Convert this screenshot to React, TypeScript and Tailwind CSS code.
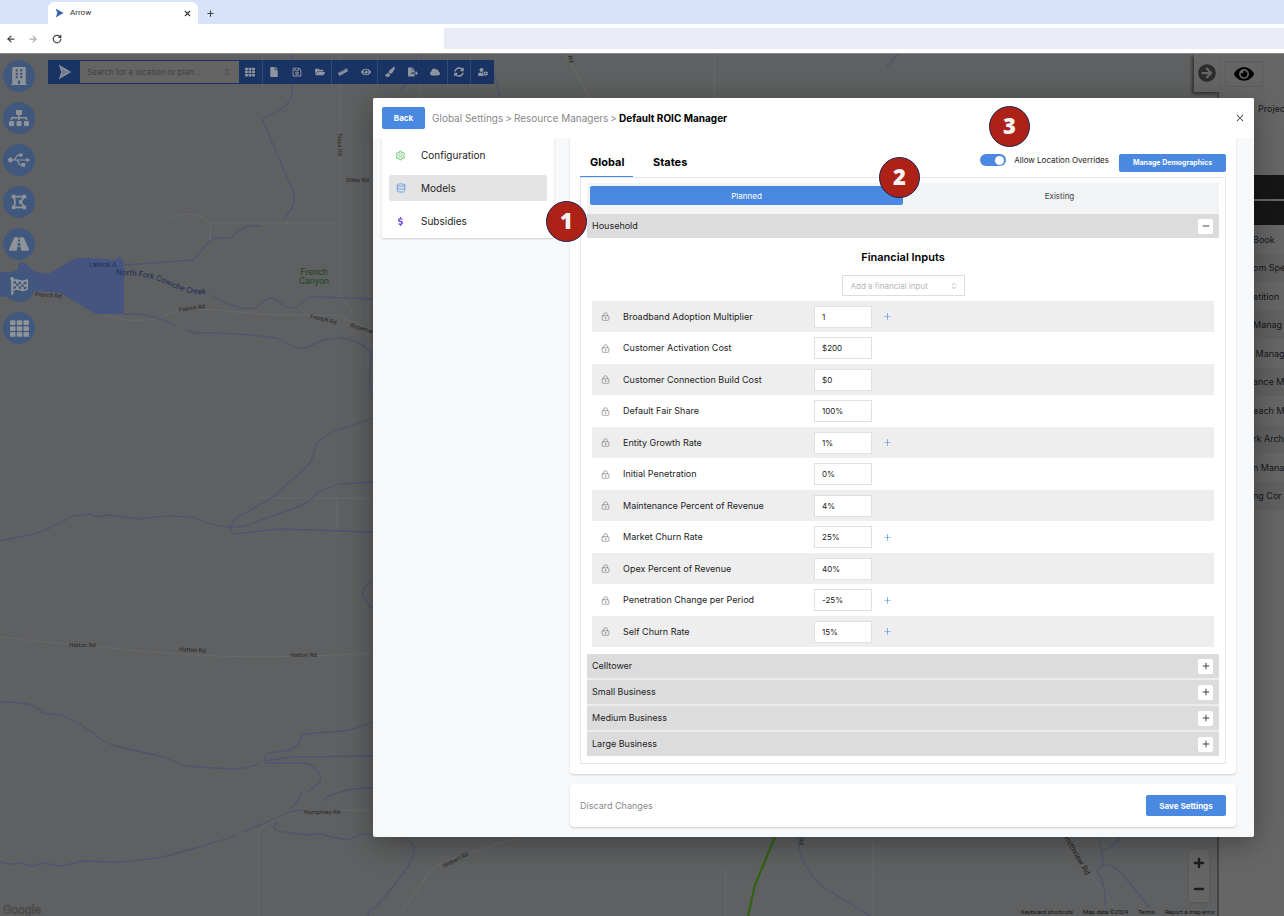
import { useState, type ReactNode } from "react";
import { AiOutlineClose, AiOutlinePlus, AiOutlineSetting } from "react-icons/ai";
import {
  FaArrowCircleRight,
  FaBuilding,
  FaCloud,
  FaDollarSign,
  FaEye,
  FaFile,
  FaFileExport,
  FaFlagCheckered,
  FaFolderOpen,
  FaPaintBrush,
  FaRegSave,
  FaRoad,
  FaRuler,
  FaSitemap,
  FaSyncAlt,
  FaTh,
  FaUsb,
  FaUserCog,
} from "react-icons/fa";
import {
  ArrowLeft,
  ArrowRight,
  ChevronsUpDown,
  Database,
  LockKeyhole,
  Minus,
  Plus,
  RotateCw,
  X,
} from "lucide-react";

type FinancialInput = {
  name: string;
  value: string;
  expandable?: boolean;
};

const FINANCIAL_INPUTS: FinancialInput[] = [
  { name: "Broadband Adoption Multiplier", value: "1", expandable: true },
  { name: "Customer Activation Cost", value: "$200" },
  { name: "Customer Connection Build Cost", value: "$0" },
  { name: "Default Fair Share", value: "100%" },
  { name: "Entity Growth Rate", value: "1%", expandable: true },
  { name: "Initial Penetration", value: "0%" },
  { name: "Maintenance Percent of Revenue", value: "4%" },
  { name: "Market Churn Rate", value: "25%", expandable: true },
  { name: "Opex Percent of Revenue", value: "40%" },
  { name: "Penetration Change per Period", value: "-25%", expandable: true },
  { name: "Self Churn Rate", value: "15%", expandable: true },
];

const CLOSED_SECTIONS = ["Celltower", "Small Business", "Medium Business", "Large Business"];

const PANEL_ROWS = [
  "Book",
  "om Spe",
  "etition",
  "Manag",
  " Manag",
  "ance M",
  "each M",
  "rk Arch",
  "n Mana",
  "ng Cor",
];

const TOOLS = [
  { label: "Grid", icon: <FaTh />, divider: false },
  { label: "New", icon: <FaFile />, divider: true },
  { label: "Save", icon: <FaRegSave />, divider: false },
  { label: "Open", icon: <FaFolderOpen />, divider: false },
  { label: "Measure", icon: <FaRuler />, divider: true },
  { label: "View", icon: <FaEye />, divider: false },
  { label: "Paint", icon: <FaPaintBrush />, divider: true },
  { label: "Export", icon: <FaFileExport />, divider: false },
  { label: "Cloud", icon: <FaCloud />, divider: false },
  { label: "Sync", icon: <FaSyncAlt />, divider: true },
  { label: "User settings", icon: <FaUserCog />, divider: true },
];

const primaryBtn = "rounded-xs bg-[#4a89e2] text-center font-bold text-white";

function ArrowLogo({ className }: { className: string }) {
  return (
    <svg viewBox="0 0 24 24" className={className} aria-hidden="true">
      <path d="M4 1 L23 12 L4 23 L8 12 Z" fill="currentColor" />
      <path
        d="M5 4 L10 8 L11 12 L10 16 L5 20 M10 8 L15 12 L10 16 M8 12 H22"
        fill="none"
        stroke="#22375f"
        strokeOpacity="0.55"
        strokeWidth="1"
      />
    </svg>
  );
}

function BoundaryIcon() {
  return (
    <svg viewBox="0 0 20 20" className="size-[18px]" fill="none" stroke="currentColor" strokeWidth="2">
      <path d="M4 4 H16 L12 10 L16 16 H4 C6 12 6 8 4 4 Z" />
      <g fill="currentColor" stroke="none">
        <rect x="2" y="2" width="4" height="4" />
        <rect x="14" y="2" width="4" height="4" />
        <rect x="2" y="14" width="4" height="4" />
        <rect x="14" y="14" width="4" height="4" />
        <rect x="10" y="8" width="3" height="4" />
      </g>
    </svg>
  );
}

const RAIL = [
  { label: "Buildings", icon: <FaBuilding size={18} /> },
  { label: "Hierarchy", icon: <FaSitemap size={20} /> },
  { label: "Connections", icon: <FaUsb size={22} /> },
  { label: "Boundaries", icon: <BoundaryIcon /> },
  { label: "Roads", icon: <FaRoad size={20} /> },
  { label: "Milestones", icon: <FaFlagCheckered size={18} /> },
  { label: "Tiles", icon: <FaTh size={19} /> },
];

function BrowserChrome() {
  return (
    <header className="shrink-0 border-b border-[#8a8a8a] bg-white">
      <div className="flex h-6 items-end bg-[#d7e2fb] pl-12">
        <div className="flex h-[22px] w-[150px] items-center rounded-t-md bg-white px-1.5 font-[Roboto,sans-serif] text-[8px] text-[#333]">
          <ArrowLogo className="mr-1.5 size-2.5 text-[#3f6fc0]" />
          <span className="flex-1">Arrow</span>
          <button type="button" aria-label="Close tab">
            <X size={9} strokeWidth={3} />
          </button>
        </div>
        <button type="button" aria-label="New tab" className="flex h-[22px] items-center px-2 text-[#444]">
          <Plus size={9} strokeWidth={3} />
        </button>
      </div>
      <div className="flex h-[29px] items-center text-[#444]">
        <button type="button" aria-label="Back" className="pl-1.5">
          <ArrowLeft size={10} strokeWidth={3} />
        </button>
        <button type="button" aria-label="Forward" className="pl-3 text-[#aaa]">
          <ArrowRight size={10} strokeWidth={3} />
        </button>
        <button type="button" aria-label="Reload" className="pl-3.5">
          <RotateCw size={10} strokeWidth={3} />
        </button>
        <input aria-label="Address" className="ml-[382px] h-[21px] min-w-0 flex-1 bg-[#e9ecf6]" />
      </div>
    </header>
  );
}

function MapCanvas() {
  return (
    <svg
      viewBox="0 54 1220 862"
      preserveAspectRatio="xMinYMin slice"
      className="absolute inset-0 size-full border-r-2 border-[#444] bg-[#5f6061]"
      fontFamily="Roboto, sans-serif"
      fontSize="7"
      fill="#262626"
      aria-label="Map"
    >
      <g fill="none" stroke="#68696a" strokeWidth="1.2">
        <path d="M340 54 V296 L352 312 M368 140 V370" />
        <path d="M170 218 Q195 208 210 223 H335 M210 223 V240" />
        <path d="M60 294 Q80 300 96 312 Q130 325 160 318 C190 300 230 316 300 315 H335 L373 330" />
        <path d="M256 498 H373 M337 498 V530" />
        <path d="M0 637 Q100 648 180 654 T373 653" />
        <path d="M304 810 Q270 818 258 832 V916 M340 810 H373" />
        <path d="M518 838 L453 858 Q432 866 424 880 L400 913" />
        <path d="M714 54 V98 M420 54 V98 M565 54 L590 98" />
        <path d="M873 837 V916 M726 870 V916 M1090 873 L1120 916" />
      </g>
      <g fill="none" stroke="#505471" strokeWidth="1.3" strokeLinejoin="round">
        <path d="M292 54 V95 Q289 106 275 113 Q262 117 263 121 L294 194 Q296 206 283 220" />
        <path d="M124 265 L193 260 L213 238 L230 238 L246 226 L260 226" />
        <path d="M211 295 Q240 312 256 308 Q268 295 275 299 Q290 312 299 306 Q306 295 320 297 L373 299" />
        <path d="M124 314 Q150 312 176 326 M186 330 L197 333 Q230 332 276 338 L297 348 H308 Q320 338 342 338 Q365 342 371 354 Q368 385 372 397" />
        <path d="M373 418 L335 431 Q316 440 315 448 Q312 463 305 468 L273 497 L235 519 Q228 530 233 534 L280 529 L373 532" />
        <path d="M373 482 L340 484 Q328 488 318 492 Q308 504 297 507 L245 526 Q220 530 195 518 Q165 514 140 519 L110 515 L96 517 L90 514 L73 516 Q45 532 29 535 L0 541" />
        <path d="M373 582 Q358 588 364 598 L372 609" />
        <path d="M0 702 Q25 702 37 707 Q42 714 47 714 L61 715 Q80 722 102 740 L112 745 L163 757 L186 766 Q215 768 233 769 Q250 768 259 764" />
        <path d="M265 762 Q263 756 270 753 L290 750 L298 745 L303 734 L345 731 L359 727 L373 722" />
        <path d="M265 761 Q285 757 302 757 L373 756 M265 763 L300 763 Q312 763 316 769 Q324 778 318 784 L307 792 M301 792 Q298 803 291 808 M322 801 Q338 788 373 788" />
        <path d="M0 862 L10 864 L20 863 L32 866 L43 863 L61 866 L84 861 L118 862 L159 858 L196 848 L235 836 M243 832 L265 823 L291 812 L304 810" />
        <path d="M278 822 Q268 828 282 832 L306 835 L320 834 L347 840 L363 834 H373" />
        <path d="M400 837 Q416 842 414 853 L408 867 L388 893 L376 907 Q370 908 368 916" />
        <path d="M420 54 Q425 70 400 90 M493 70 L500 98 M886 68 L898 54" />
        <path d="M798 837 Q798 850 804 862 Q815 885 833 893 L870 916" />
        <path d="M1099 838 Q1103 855 1103 865 Q1094 870 1099 874 Q1106 885 1105 907 M1103 865 Q1112 864 1120 872 L1133 887 L1149 907 M1103 851 Q1115 845 1120 838" />
      </g>
      <path d="M775 837 L755 885 L748 916" fill="none" stroke="#306411" strokeWidth="2.2" />
      <path
        d="M0 272 H18 V264 Q22 260 27 265 Q38 276 50 273 L74 259 Q82 256 116 260 L119 256 L124 262 V314 H96 Q80 305 60 293 L35 291 L20 296 L0 297 Z"
        fill="#46557f"
      />
      <path id="creek" d="M116 275 Q150 275 170 286 Q190 296 214 294" fill="none" />
      <text fill="#1b2f5c" fontSize="8">
        <textPath href="#creek">North Fork Cowiche Creek</textPath>
      </text>
      <text x="89" y="267" fill="#1b2f5c">
        Lateral A
      </text>
      <g fill="#1f4420" fontSize="9" textAnchor="middle">
        <text x="314" y="275">French</text>
        <text x="314" y="284">Canyon</text>
      </g>
      <g fontSize="6">
        <text transform="translate(35 296) rotate(5)">French Rd</text>
        <text transform="translate(179 312) rotate(-8)">French Rd</text>
        <text transform="translate(310 318) rotate(14)">French Rd</text>
        <text transform="translate(350 327) rotate(16)">Roseman</text>
        <text transform="translate(338 134) rotate(90)">Naye Rd</text>
        <text x="346" y="182">Dilley Rd</text>
        <text x="69" y="647">Hatton Rd</text>
        <text transform="translate(179 651) rotate(4)">Hatton Rd</text>
        <text x="290" y="657">Hatton Rd</text>
        <text x="304" y="814">Humphrey Rd</text>
        <text transform="translate(444 868) rotate(-27)">Wobert Rd</text>
        <text transform="translate(799 838) rotate(85)">Rd</text>
        <text transform="translate(568 56) rotate(80)">Rd</text>
      </g>
      <text fontSize="8" transform="translate(1064 838) rotate(60)">mithview Rd</text>
      <text x="3" y="914" fontSize="12" fill="#5f6061" stroke="#484848" strokeWidth="0.7">
        Google
      </text>
    </svg>
  );
}

function MapToolbar() {
  return (
    <div className="flex h-6 w-[446px] items-stretch bg-[#1a3365] text-[#8f959e]">
      <button type="button" aria-label="Home" className="flex w-8 items-center justify-center">
        <ArrowLogo className="size-4" />
      </button>
      <div className="relative my-px w-[159px] bg-[#646464]">
        <input
          aria-label="Search"
          placeholder="Search for a location or plan..."
          className="block size-full pr-5 pl-[7px] text-[8px] placeholder:text-[#414141]"
        />
        <ChevronsUpDown size={8} className="absolute top-[7px] right-2 text-[#303030]" />
      </div>
      {TOOLS.map((tool) => (
        <button
          key={tool.label}
          type="button"
          aria-label={tool.label}
          className={`flex flex-1 items-center justify-center text-[10px] ${
            tool.divider ? "border-l border-[#334b77]" : ""
          }`}
        >
          {tool.icon}
        </button>
      ))}
    </div>
  );
}

function MapControls() {
  return (
    <div className="flex flex-col items-end font-[Roboto,sans-serif] text-[#1d1d1d]">
      <div className="mr-2.5 mb-1.5 flex w-5 flex-col bg-[#656565] shadow">
        <button type="button" aria-label="Zoom in" className="flex h-[26px] items-center justify-center">
          <Plus size={14} strokeWidth={4} />
        </button>
        <button type="button" aria-label="Zoom out" className="flex h-[26px] items-center justify-center">
          <Minus size={14} strokeWidth={4} />
        </button>
      </div>
      <div className="flex gap-2.5 pr-1 text-[6px] leading-2 text-[#141414]">
        <button type="button">Keyboard shortcuts</button>
        <span>Map data ©2024</span>
        <a href="#terms">Terms</a>
        <a href="#report">Report a map error</a>
      </div>
    </div>
  );
}

function SidePanel() {
  return (
    <aside className="w-[65px] shrink-0 overflow-hidden bg-[#666] text-[9px] whitespace-pre text-[#161616]">
      <div className="flex h-10 items-center pl-1.5">
        <button
          type="button"
          aria-label="Toggle visibility"
          className="flex h-[26px] w-[38px] items-center justify-center border border-[#595e61] text-[20px] text-black"
        >
          <FaEye />
        </button>
      </div>
      <p className="mt-2 pl-[39px] leading-[14px]">Projec</p>
      <div className="mt-[59px] flex flex-col gap-0.5">
        <div className="h-6 bg-[#161616]" />
        <div className="h-6 bg-[#161616]" />
      </div>
      <ul>
        {PANEL_ROWS.map((row) => (
          <li key={row} className="flex h-7 items-center pl-[34px] odd:h-[29px] even:bg-[#616161]">
            {row}
          </li>
        ))}
      </ul>
    </aside>
  );
}

function Workspace() {
  return (
    <div className="absolute inset-0 flex">
      <div className="relative flex min-w-0 flex-1 flex-col justify-between">
        <MapCanvas />
        <div className="relative flex items-start pl-[3px]">
          <nav aria-label="Map layers" className="flex flex-col gap-2.5 pt-1.5">
            {RAIL.map((item) => (
              <button
                key={item.label}
                type="button"
                aria-label={item.label}
                className="flex size-8 items-center justify-center rounded-full bg-[#40587e] text-[#8f9297]"
              >
                {item.icon}
              </button>
            ))}
          </nav>
          <div className="ml-[13px] pt-1.5">
            <MapToolbar />
          </div>
          <button
            type="button"
            aria-label="Collapse panel"
            className="ml-auto flex h-[38px] w-[25px] items-center justify-center bg-[#666] text-[18px] text-[#2c2c2c] shadow-[-2px_2px_3px_#333]"
          >
            <FaArrowCircleRight />
          </button>
        </div>
        <div className="relative">
          <MapControls />
        </div>
      </div>
      <SidePanel />
    </div>
  );
}

function NavItem({ icon, label, active }: { icon: ReactNode; label: string; active?: boolean }) {
  return (
    <a
      href={`#${label.toLowerCase()}`}
      className={`flex h-[26px] items-center rounded-xs pl-1.5 text-[10px] text-[#222] ${
        active ? "bg-[#e4e4e4]" : ""
      }`}
    >
      <span className="mr-[15px] flex w-[11px] justify-center">{icon}</span>
      {label}
    </a>
  );
}

function SectionHeader({ title, open }: { title: string; open?: boolean }) {
  return (
    <div className="flex h-6 items-center justify-between bg-[#dcdcdc] pr-1.5 pl-[5px] text-[9px] text-[#222]">
      <h3>{title}</h3>
      <button
        type="button"
        aria-expanded={Boolean(open)}
        aria-label={title}
        className="flex size-[15px] items-center justify-center rounded-xs bg-white text-[#222]"
      >
        {open ? <Minus size={10} /> : <Plus size={10} />}
      </button>
    </div>
  );
}

function FinancialInputs() {
  return (
    <div className="px-[5px] pb-[7px] text-[#222]">
      <h2 className="pt-3 text-center text-[11px] leading-[14px] font-semibold text-black">
        Financial Inputs
      </h2>
      <div className="relative mx-auto mt-[11px] mb-[5px] h-[21px] w-[123px]">
        <select
          aria-label="Add a financial input"
          className="block size-full appearance-none border border-[#ddd] bg-white pl-2 text-[8px] text-[#b5b5b5]"
        >
          <option>Add a financial input</option>
        </select>
        <ChevronsUpDown size={8} className="pointer-events-none absolute top-[7px] right-[7px] text-[#999]" />
      </div>
      <table className="w-full table-fixed border-collapse">
        <colgroup>
          <col className="w-[31px]" />
          <col className="w-[191px]" />
          <col className="w-[58px]" />
          <col />
        </colgroup>
        <tbody>
          {FINANCIAL_INPUTS.map((input, i) => (
            <tr key={input.name} className="h-8 odd:h-[31px] odd:bg-[#eee]">
              <td className="p-0 pl-[9px]">
                <LockKeyhole size={9} strokeWidth={2} className="text-[#888]" />
              </td>
              <td className="p-0 text-[9px] leading-4">
                <label htmlFor={`input-${i}`}>{input.name}</label>
              </td>
              <td className="p-0">
                <input
                  id={`input-${i}`}
                  defaultValue={input.value}
                  className="block h-[22px] w-full border border-[#e0e0e0] bg-white pl-[7px] text-[8px]"
                />
              </td>
              <td className="p-0 pl-2.5">
                {input.expandable && (
                  <button
                    type="button"
                    aria-label={`Expand ${input.name}`}
                    className="flex size-[10px] items-center justify-center text-[#4a89e2]"
                  >
                    <AiOutlinePlus size={9} />
                  </button>
                )}
              </td>
            </tr>
          ))}
        </tbody>
      </table>
    </div>
  );
}

function Callout({ value, className }: { value: number; className: string }) {
  return (
    <span
      className={`absolute flex size-[41px] items-center justify-center rounded-full border border-[#1c2352] bg-[#ad2117] pb-0.5 font-['Open_Sans',sans-serif] text-[22px] font-extrabold text-[#f3f3f3] ${className}`}
    >
      {value}
    </span>
  );
}

function ManagerDialog() {
  const [allowOverrides, setAllowOverrides] = useState(true);

  return (
    <div
      role="dialog"
      aria-label="Default ROIC Manager"
      className="relative flex min-w-0 flex-1 flex-col self-start rounded-xs bg-[#f7f8fa] shadow-[0_6px_30px_rgba(0,0,0,0.35)]"
    >
      <div className="flex h-10 items-center rounded-t-xs bg-white px-[9px]">
        <button type="button" className={`${primaryBtn} h-[22px] w-[43px] text-[8px]`}>
          Back
        </button>
        <nav aria-label="Breadcrumb" className="ml-[7px] flex gap-0.5 text-[10px] text-[#888]">
          <a href="#global-settings">Global Settings</a>
          <span>&gt;</span>
          <a href="#resource-managers">Resource Managers</a>
          <span>&gt;</span>
          <strong className="font-bold text-black">Default ROIC Manager</strong>
        </nav>
        <button type="button" aria-label="Close" className="ml-auto text-[#444]">
          <AiOutlineClose size={10} />
        </button>
      </div>

      <div className="flex items-start gap-4 pr-[18px] pb-2.5 pl-[9px]">
        <nav
          aria-label="Settings"
          className="flex w-[172px] shrink-0 flex-col gap-[7px] rounded-b-xs bg-white px-[7px] py-1 shadow-[0_1px_2px_#ccc]"
        >
          <NavItem label="Configuration" icon={<AiOutlineSetting size={11} className="text-[#62c766]" />} />
          <NavItem label="Models" active icon={<Database size={10} className="text-[#5b95e6]" />} />
          <NavItem label="Subsidies" icon={<FaDollarSign size={9} className="text-[#6f45ea]" />} />
        </nav>

        <div className="flex min-w-0 flex-1 flex-col gap-2.5">
          <section className="rounded-b-sm bg-white px-2.5 pb-2.5 shadow-[0_1px_2px_#ccc]">
            <div className="flex h-[39px] items-end">
              <div role="tablist" className="flex text-[11px] font-bold text-black">
                <button
                  type="button"
                  role="tab"
                  aria-selected
                  className="h-[29px] w-[53px] border-b border-[#4a89e2] pl-2.5 text-left"
                >
                  Global
                </button>
                <button
                  type="button"
                  role="tab"
                  aria-selected={false}
                  className="h-[29px] border-b border-transparent pl-5"
                >
                  States
                </button>
              </div>
              <div className="ml-auto flex items-start gap-2.5 pb-[5px]">
                <label className="flex items-center gap-2 text-[8px] leading-3 text-[#222]">
                  <input
                    type="checkbox"
                    role="switch"
                    checked={allowOverrides}
                    onChange={(e) => setAllowOverrides(e.target.checked)}
                    className="flex h-3 w-[26px] appearance-none items-center rounded-full bg-[#bbb] px-0.5 before:size-[9px] before:rounded-full before:bg-white checked:justify-end checked:bg-[#4a89e2]"
                  />
                  Allow Location Overrides
                </label>
                <button type="button" className={`${primaryBtn} h-[18px] w-[107px] text-[7px]`}>
                  Manage Demographics
                </button>
              </div>
            </div>

            <div className="border border-[#e2e5ea] px-1.5 pt-[5px] pb-[7px]">
              <div role="tablist" className="flex h-[31px] bg-[#f1f3f5] px-[3px] pt-[3px] text-[8px]">
                <button
                  type="button"
                  role="tab"
                  aria-selected
                  className="h-[19px] flex-1 rounded-xs bg-[#4a89e2] text-white"
                >
                  Planned
                </button>
                <button type="button" role="tab" aria-selected={false} className="h-[19px] flex-1 text-[#444]">
                  Existing
                </button>
              </div>
              <SectionHeader title="Household" open />
              <FinancialInputs />
              <div className="flex flex-col gap-0.5 bg-[#ececec]">
                {CLOSED_SECTIONS.map((title) => (
                  <SectionHeader key={title} title={title} />
                ))}
              </div>
            </div>
          </section>

          <footer className="flex h-[43px] items-center justify-between rounded-sm bg-white px-2.5 shadow-[0_1px_2px_#ccc]">
            <button type="button" className="text-[9px] text-[#888]">
              Discard Changes
            </button>
            <button type="button" className={`${primaryBtn} h-[21px] w-20 text-[8px]`}>
              Save Settings
            </button>
          </footer>
        </div>
      </div>

      <Callout value={1} className="top-[103px] left-[173px]" />
      <Callout value={2} className="top-[59px] right-[334px]" />
      <Callout value={3} className="top-2 right-[224px]" />
    </div>
  );
}

export default function App() {
  return (
    <div className="flex min-h-screen flex-col overflow-hidden bg-[#666] font-[Inter,sans-serif]">
      <BrowserChrome />
      <main className="relative flex flex-1">
        <Workspace />
        <div className="relative flex flex-1 pt-11 pr-[30px] pb-10 pl-[373px]">
          <ManagerDialog />
        </div>
      </main>
    </div>
  );
}
